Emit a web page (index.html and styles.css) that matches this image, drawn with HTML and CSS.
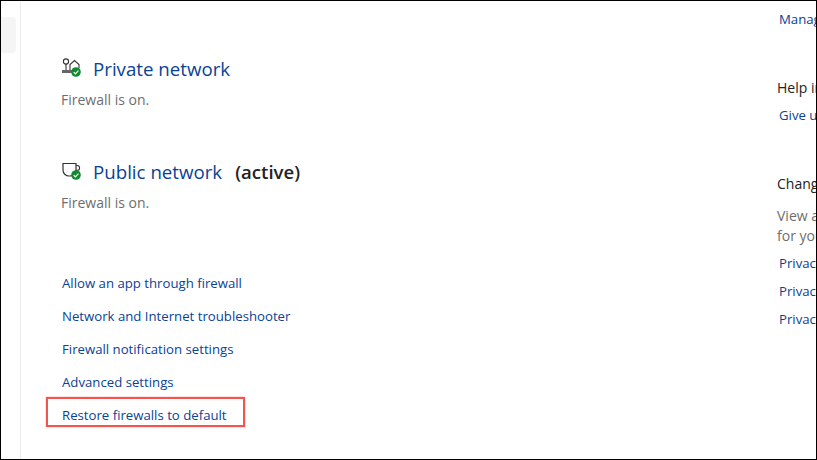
FILE: index.html
```html
<!DOCTYPE html>
<html lang="en">
<head>
  <meta charset="UTF-8" />
  <title>Windows Firewall</title>
  <link rel="stylesheet" href="styles.css">
</head>
<body>
  <div class="window">
    <nav class="sidebar">
      <div class="nav-item"></div>
    </nav>

    <main class="content">
      <p class="status status-cut">Firewall is on.</p>

      <section class="network network-private">
        <h2 class="network-title">
          <svg class="network-icon" width="22" height="22" viewBox="0 0 22 22">
            <circle cx="5" cy="4.5" r="2.6" fill="none" stroke="#333" stroke-width="1.1"/>
            <path d="M5 7v6" stroke="#333" stroke-width="1.1"/>
            <path d="M9 13V7.5L13.5 3.5 18 7.5V11" fill="none" stroke="#333" stroke-width="1.1"/>
            <path d="M1 14.5h12" stroke="#666" stroke-width="3"/>
            <circle cx="15" cy="15" r="4.8" fill="#0f8a2f"/>
            <path d="M12.7 15.1l1.7 1.7 3-3.2" fill="none" stroke="#fff" stroke-width="1.2"/>
          </svg>
          <a class="network-link">Private network</a>
        </h2>
        <p class="status">Firewall is on.</p>
      </section>

      <section class="network">
        <h2 class="network-title">
          <svg class="network-icon" width="22" height="22" viewBox="0 0 22 22">
            <path d="M2 3.5h13v6.5a6 6 0 0 1-6 6H8a6 6 0 0 1-6-6z" fill="none" stroke="#333" stroke-width="1.2"/>
            <path d="M15 5.5h1.2a2.4 2.4 0 0 1 0 4.8H15" fill="none" stroke="#333" stroke-width="1.1"/>
            <circle cx="15" cy="15" r="4.8" fill="#0f8a2f"/>
            <path d="M12.7 15.1l1.7 1.7 3-3.2" fill="none" stroke="#fff" stroke-width="1.2"/>
          </svg>
          <a class="network-link">Public network</a>
          <span class="network-active">(active)</span>
        </h2>
        <p class="status">Firewall is on.</p>
      </section>

      <ul class="actions">
        <li><a class="action-link">Allow an app through firewall</a></li>
        <li><a class="action-link">Network and Internet troubleshooter</a></li>
        <li><a class="action-link">Firewall notification settings</a></li>
        <li><a class="action-link">Advanced settings</a></li>
        <li class="highlighted"><a class="action-link">Restore firewalls to default</a></li>
      </ul>
    </main>

    <aside class="side">
      <a class="action-link side-manage">Manage notifications</a>

      <h3 class="side-title side-help">Help improve</h3>
      <a class="action-link side-give">Give us feedback</a>

      <h3 class="side-title side-change">Change your privacy</h3>
      <p class="side-text">View and change privacy settings<br>for your device</p>
      <a class="action-link side-privacy">Privacy dashboard</a>
      <a class="action-link side-privacy">Privacy statement</a>
      <a class="action-link side-privacy">Privacy settings</a>
    </aside>
  </div>
</body>
</html>
```

FILE: styles.css
```css
html, body {
  margin: 0;
  height: 100%;
  overflow: hidden;
}

body {
  font-family: 'Open Sans', 'Noto Sans', sans-serif;
  background: #000;
}

.window {
  display: flex;
  box-sizing: border-box;
  height: 458px;
  margin: 1px 1px 0 1px;
  background: #fff;
  overflow: hidden;
}

.sidebar {
  flex: 0 0 19px;
  border-right: 1px solid #eaeaea;
}

.nav-item {
  width: 15px;
  height: 36px;
  margin-top: 16px;
  background: #f5f5f5;
  border-radius: 0 4px 4px 0;
}

.content {
  flex: 0 0 756px;
  box-sizing: border-box;
  padding-left: 40px;
}

.status {
  margin: 0;
  font-size: 14px;
  line-height: 20px;
  color: #6e6e6e;
}

.status-cut {
  margin-top: -17px;
}

.network-private {
  margin-top: 50px;
}

.network + .network {
  margin-top: 47px;
}

.network-title {
  display: flex;
  align-items: center;
  margin: 0 0 8px;
  height: 28px;
  font-size: 18.7px;
  font-weight: 400;
}

.network-icon {
  flex: none;
  margin-right: 10px;
}

.network-link {
  padding-top: 1px;
  color: #0a4296;
}

.network-active {
  margin-left: 13px;
  font-weight: 600;
  font-size: 18.6px;
  color: #222;
}

.actions {
  list-style: none;
  margin: 59px 0 0;
  padding: 0 0 0 1px;
  display: flex;
  flex-direction: column;
  gap: 13px;
}

.actions li {
  height: 20px;
  line-height: 20px;
}

.action-link {
  font-size: 13.2px;
  color: #0a4296;
  white-space: nowrap;
}

.highlighted {
  position: relative;
}

.highlighted::after {
  content: "";
  position: absolute;
  left: -16px;
  top: -7px;
  width: 195px;
  height: 26px;
  border: 2px solid #f4544e;
  box-shadow: 0 0 1px #f4544e;
}

.side {
  flex: 0 0 41px;
  display: flex;
  flex-direction: column;
  align-items: flex-start;
  white-space: nowrap;
}

.side-manage {
  margin: 8px 0 0 2px;
  line-height: 20px;
}

.side-title {
  margin: 0;
  font-size: 14px;
  line-height: 20px;
  font-weight: 400;
  color: #222;
}

.side-help {
  margin-top: 49px;
}

.side-give {
  margin: 7px 0 0 2px;
  line-height: 20px;
}

.side-change {
  margin-top: 49px;
}

.side-text {
  margin: 12px 0 0;
  font-size: 14px;
  line-height: 20px;
  color: #6e6e6e;
}

.side-privacy {
  margin: 7px 0 0 2px;
  line-height: 20px;
}

.side-text + .side-privacy ~ .side-privacy {
  margin-top: 8px;
}
```
